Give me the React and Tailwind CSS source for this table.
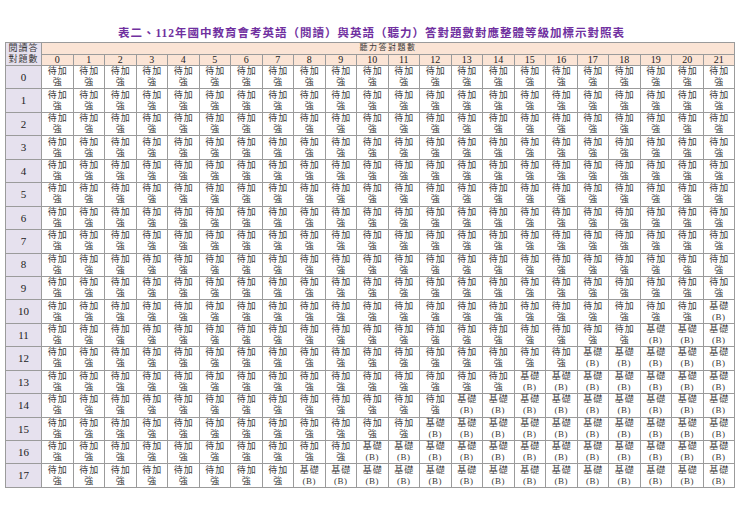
// 112年國中教育會考英語 閱讀/聽力 答對題數對照表
const cols = Array.from({ length: 22 }, (_, i) => i);
const rows = Array.from({ length: 18 }, (_, i) => i);

// first listening column where the level turns into 基礎(B), per reading row
const basicFrom = { 10: 21, 11: 19, 12: 17, 13: 15, 14: 13, 15: 12, 16: 10, 17: 8 };

const font = { fontFamily: '"Liberation Serif", "Noto Sans CJK TC", serif' };

function Cell({ basic }) {
    return (
        <td className="border border-[#9b9b9b] bg-white p-0 text-center align-middle text-[9px] leading-[11px] text-[#3a3a3a]">
            {basic ? (
                <>
                    <div className="tracking-[1px] pl-[1px]">基礎</div>
                    <div className="tracking-[0.5px]">(B)</div>
                </>
            ) : (
                <>
                    <div className="tracking-[1px] pl-[1px]">待加</div>
                    <div>強</div>
                </>
            )}
        </td>
    );
}

export default function App() {
    return (
        <div className="w-[740px] h-[523px] bg-white pt-[24px]" style={font}>
            <h1 className="text-center text-[11.5px] leading-[18px] font-bold tracking-[1px] text-[#7030a0] pl-[3px]">
                表二、112年國中教育會考英語（閱讀）與英語（聽力）答對題數對應整體等級加標示對照表
            </h1>

            <table className="ml-[5px] w-[730px] table-fixed border-collapse border border-[#8a8a8a]">
                <colgroup>
                    <col className="w-[36px]" />
                    {cols.map((c) => (
                        <col key={c} />
                    ))}
                </colgroup>
                <thead>
                    <tr className="h-[11px]">
                        <td
                            rowSpan={2}
                            className="border border-[#9b9b9b] bg-[#e6e1ee] p-0 text-center text-[9px] leading-[11px] tracking-[1px] text-[#3a3a3a]"
                        >
                            <div>閱讀答</div>
                            <div>對題數</div>
                        </td>
                        <td
                            colSpan={22}
                            className="border border-[#9b9b9b] bg-[#fbe4d5] p-0 text-center text-[8px] leading-[10px] tracking-[1.5px] text-[#3a3a3a]"
                        >
                            聽力答對題數
                        </td>
                    </tr>
                    <tr className="h-[11px]">
                        {cols.map((c) => (
                            <td
                                key={c}
                                className="border border-[#9b9b9b] bg-[#fbe4d5] p-0 text-center text-[10px] leading-[10px] text-[#222]"
                            >
                                {c}
                            </td>
                        ))}
                    </tr>
                </thead>
                <tbody>
                    {rows.map((r) => (
                        <tr key={r} className="h-[23.45px]">
                            <td className="border border-[#9b9b9b] bg-[#e6e1ee] p-0 text-center align-middle text-[11px] text-[#222]">
                                {r}
                            </td>
                            {cols.map((c) => (
                                <Cell key={c} basic={basicFrom[r] !== undefined && c >= basicFrom[r]} />
                            ))}
                        </tr>
                    ))}
                </tbody>
            </table>
        </div>
    );
}
